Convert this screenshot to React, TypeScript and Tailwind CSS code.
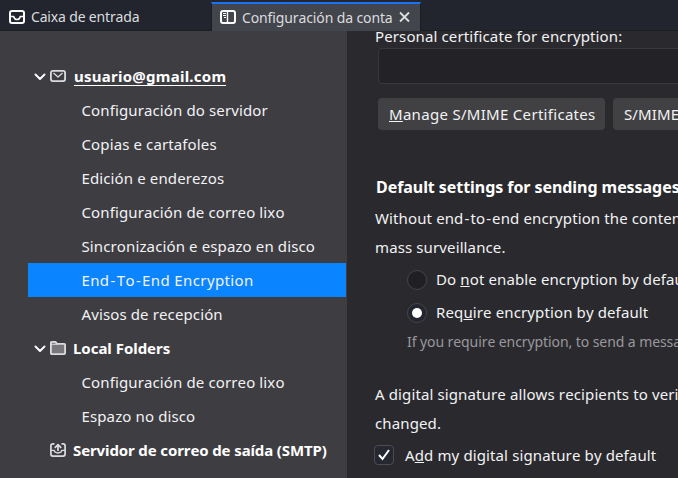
import type { ReactNode } from "react";

function InboxIcon() {
  return (
    <svg className="size-4 shrink-0" viewBox="0 0 16 16" fill="none" stroke="#fbfbfe" strokeWidth="2" strokeLinejoin="round">
      <rect x="1" y="2" width="14" height="12" rx="2" />
      <path d="M2 7.500h2.700c.4 2 1.600 3 3.300 3s2.900-1 3.300-3H14" strokeWidth="1.500" />
    </svg>
  );
}

function SettingsTabIcon() {
  return (
    <svg className="size-4 shrink-0" viewBox="0 0 16 16" fill="none" stroke="#fbfbfe">
      <rect x="1" y="2" width="14" height="12" rx="2" strokeWidth="2" />
      <path d="M7.500 2v12" strokeWidth="1.400" />
      <path d="M3 4.500h3M3 6.500h3M4 8.500h2" strokeWidth="1" />
    </svg>
  );
}

function Chevron() {
  return (
    <svg className="ml-[34px] mr-1 h-3 w-3 shrink-0" viewBox="0 0 12 12" fill="none" stroke="#fbfbfe" strokeWidth="2" strokeLinecap="round" strokeLinejoin="round">
      <path d="M1.500 4.500L6 9 10.500 4.500" />
    </svg>
  );
}

function MailIcon() {
  return (
    <svg className="size-4 shrink-0" viewBox="0 0 16 16" fill="none" stroke="#dcdcde" strokeLinejoin="round">
      <rect x=".9" y="2.900" width="14.200" height="10.200" rx="2" strokeWidth="1.800" />
      <path d="M3.500 5L8 9l4.500-4" strokeWidth="1.300" />
    </svg>
  );
}

function FolderIcon() {
  return (
    <svg className="size-4 shrink-0" viewBox="0 0 16 16" fill="#77767b" stroke="#dcdcde" strokeWidth="1.800" strokeLinejoin="round">
      <path d="M.9 13.100V2.500Q.9 1.900 1.500 1.900H5.500L7 3.900H14.200Q15.100 3.900 15.100 4.800V13.100Q15.100 14.100 14.200 14.100H1.800Q.9 14.100.9 13.100Z" />
      <path d="M1 4.300h6" strokeWidth="1" />
    </svg>
  );
}

function OutgoingIcon() {
  return (
    <svg className="size-4 shrink-0" viewBox="0 0 16 16" fill="none" stroke="#dcdcde" strokeWidth="1.700" strokeLinejoin="round">
      <path d="M4.500 1.900H2.900q-2 0-2 2v8.200q0 2 2 2h10.200q2 0 2-2V3.900q0-2-2-2h-1.600" />
      <path d="M1 8.300h3.200q.3 2.700 3.800 2.700t3.800-2.700H15" strokeWidth="1.300" />
      <path d="M8 9V2.500M4.800 5.800L8 2.600l3.200 3.200" />
    </svg>
  );
}

function Row({ children, selected = false }: { children: ReactNode; selected?: boolean }) {
  return (
    <li className={selected ? "ml-7 mr-px flex h-[34px] items-center bg-[#0a84ff] pl-[53.5px]" : "flex h-[34px] items-center pl-[81.5px]"}>
      {children}
    </li>
  );
}

function Radio({ checked = false }: { checked?: boolean }) {
  return (
    <span className={checked ? "flex size-5 shrink-0 items-center justify-center rounded-full border border-[#45464c] bg-[#23252f]" : "size-5 shrink-0 rounded-full border border-[#45454a] bg-[#202022]"}>
      {checked && <span className="size-[10px] rounded-full bg-white" />}
    </span>
  );
}

function Hyphen() {
  return <span className="px-px">-</span>;
}

export default function App() {
  return (
    <div className="flex h-[478px] w-[678px] flex-col overflow-hidden bg-[#2a2a2e] font-['Noto_Sans',sans-serif] text-[15px] leading-[29px] tracking-[0.12px] whitespace-nowrap text-[#f2f2f4] [font-kerning:none]">
      <header className="flex h-[31px] shrink-0 border-b border-[#1c1e26] bg-[#22252e] text-[14px] text-[#dcdcdf]">
        <div className="flex w-[211px] items-center gap-1.5 pt-[3px] pl-[9px] tracking-[-0.17px]">
          <InboxIcon />
          <span>Caixa de entrada</span>
        </div>
        <div className="mt-0.5 -mb-px flex w-[210px] items-center gap-1.5 border-x border-t-2 border-x-[#1c1e26] border-t-[#1a73f5] bg-[#42454c] pb-px pl-2 tracking-[-0.12px]">
          <SettingsTabIcon />
          <span>Configuración da conta</span>
          <svg className="size-3" viewBox="0 0 12 12" stroke="#dededf" strokeWidth="1.800"><path d="M1 1.500l9 9M10 1.500l-9 9" /></svg>
        </div>
      </header>
      <div className="flex min-h-0 flex-1">
        <nav className="w-[347px] shrink-0 bg-[#3e3d42] pt-7">
          <ul>
            <li className="flex h-[34px] items-center font-bold">
              <Chevron /><MailIcon />
              <span className="mt-px ml-2 border-b border-white leading-[17px] tracking-[0.25px] text-white">usuario@gmail.com</span>
            </li>
            <Row>Configuración do servidor</Row>
            <Row>Copias e cartafoles</Row>
            <Row>Edición e enderezos</Row>
            <Row>Configuración de correo lixo</Row>
            <Row>Sincronización e espazo en disco</Row>
            <Row selected><span className="tracking-[0.38px]">End<Hyphen />To<Hyphen />End Encryption</span></Row>
            <Row>Avisos de recepción</Row>
            <li className="flex h-[34px] items-center font-bold tracking-[-0.03px] text-white">
              <Chevron /><FolderIcon /><span className="ml-[7px]">Local Folders</span>
            </li>
            <Row>Configuración de correo lixo</Row>
            <Row>Espazo no disco</Row>
            <li className="flex h-[34px] items-center pl-[50px] font-bold tracking-[-0.12px] text-white">
              <OutgoingIcon /><span className="ml-[7px]">Servidor de correo de saída (SMTP)</span>
            </li>
          </ul>
        </nav>
        <main className="min-w-0 flex-1 overflow-hidden pl-7">
          <p className="-mt-[9px] h-[26px]">Personal certificate for encryption:</p>
          <div className="ml-[3px] h-9 w-[400px] rounded-sm border border-[#38383c] bg-[#232327]" />
          <div className="mt-[14px] ml-[3px] flex gap-2">
            <button className="h-8 w-[227px] shrink-0 rounded-sm bg-[#414143] pl-[11px] text-left tracking-[0.3px]"><u>M</u>anage S/MIME Certificates</button>
            <button className="h-8 w-[227px] shrink-0 rounded-sm bg-[#414143] pl-[11px] text-left">S/MIME Security Devices</button>
          </div>
          <h2 className="mt-[43px] ml-px text-[16px] font-bold tracking-[-0.06px] text-white">Default settings for sending messages</h2>
          <p className="mt-[2px]">Without end<Hyphen />to<Hyphen />end encryption the contents of messages<br />mass surveillance.</p>
          <div className="mt-px ml-8 flex h-[33px] items-center gap-[9px]"><Radio /><span>Do <u>n</u>ot enable encryption by default</span></div>
          <div className="ml-8 flex h-[33px] items-center gap-[9px]"><Radio checked /><span>Req<u>u</u>ire encryption by default</span></div>
          <p className="mt-[-2px] ml-8 text-[14px] tracking-[-0.08px] text-[#98989d]">If you require encryption, to send a message</p>
          <p className="mt-[24px]">A digital signature allows recipients to verify<br />changed.</p>
          <div className="mt-[2px] ml-[-1px] flex items-center gap-[11px]">
            <span className="flex size-5 items-center justify-center rounded-sm border border-[#4b4c52] bg-[#252731]">
              <svg className="size-4 shrink-0" viewBox="0 0 16 16" fill="none" stroke="white" strokeWidth="2"><path d="M3 8l3.500 4L13 3" /></svg>
            </span>
            <span className="pt-px">A<u>d</u>d my digital signature by default</span>
          </div>
        </main>
      </div>
    </div>
  );
}
